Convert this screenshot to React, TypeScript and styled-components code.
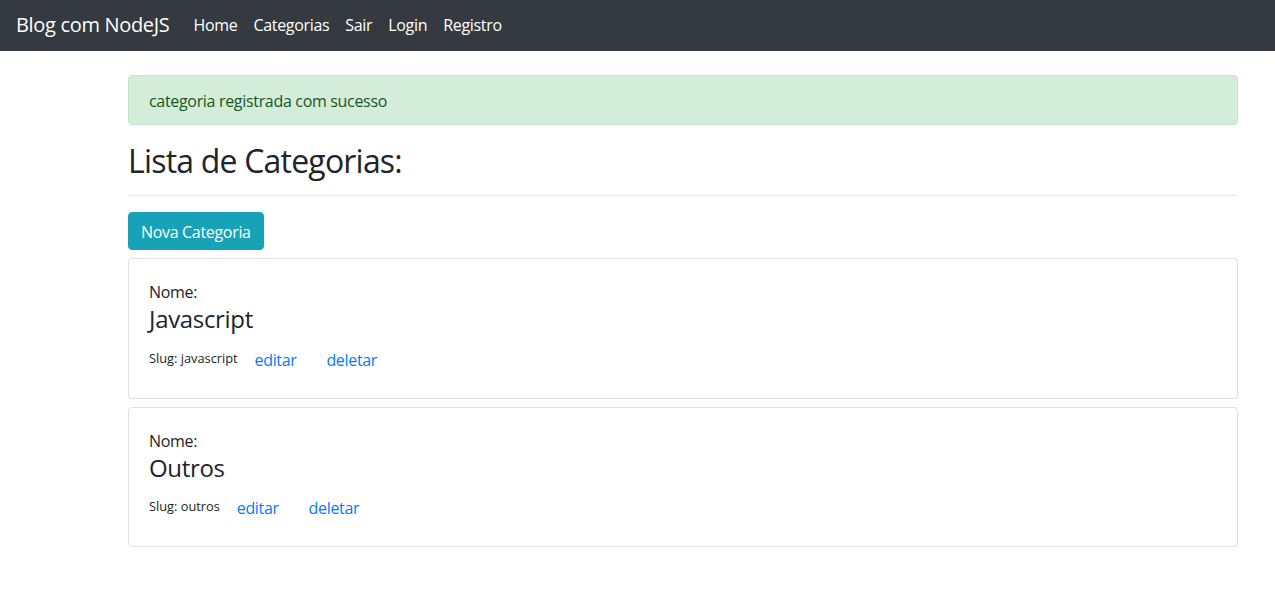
import React from 'react';
import styled, {createGlobalStyle} from 'styled-components';

const GlobalStyle = createGlobalStyle`
  * { box-sizing: border-box; }
  body {
    margin: 0;
    background: #fff;
    color: #212529;
    font-family: "Open Sans", "Noto Sans", sans-serif;
    font-size: 16px;
    line-height: 1.5;
    letter-spacing: -0.02em;
  }
`;

const Navbar = styled.nav`
  display: flex;
  align-items: center;
  height: 51px;
  padding: 0 16px 2px;
  background: #343a40;
`;

const Brand = styled.a`
  margin-right: 16px;
  font-size: 20px;
  line-height: 30px;
  color: #fff;
  text-decoration: none;
`;

const NavList = styled.div`
  display: flex;
`;

const NavLink = styled.a`
  padding: 8px;
  color: #fff;
  text-decoration: none;
`;

const Container = styled.main`
  width: 1140px;
  margin-left: 113px;
  padding: 24px 15px 0;
`;

const Alert = styled.div`
  padding: 13px 20px 11px;
  margin-bottom: 16px;
  border: 1px solid #c3e6cb;
  border-radius: 4px;
  background: #d4edda;
  color: #155724;
`;

const Title = styled.h2`
  margin: 0 0 8px;
  padding-top: 1px;
  height: 38.4px;
  font-size: 32px;
  font-weight: 500;
  line-height: 1.2;
  letter-spacing: -0.025em;
`;

const Rule = styled.hr`
  margin: 16px 0;
  border: 0;
  border-top: 1px solid rgba(0, 0, 0, 0.1);
`;

const Button = styled.button`
  padding: 7px 12px 5px;
  border: 1px solid #17a2b8;
  border-radius: 4px;
  background: #17a2b8;
  color: #fff;
  font: inherit;
  letter-spacing: inherit;
  line-height: 24px;
`;

const Card = styled.div`
  margin-top: 8px;
  padding: 20px;
  border: 1px solid rgba(0, 0, 0, 0.125);
  border-radius: 4px;
`;

const Label = styled.div`
  padding-top: 1px;
  height: 24px;
`;

const Name = styled.h4`
  margin: 0 0 5px;
  font-size: 24px;
  font-weight: 500;
  line-height: 1.3;
`;

const Slug = styled.small`
  font-size: 12.8px;
  letter-spacing: 0;
`;

const LinkButton = styled.a`
  display: inline-block;
  padding: 7px 12px 5px;
  border: 1px solid transparent;
  color: #007bff;
  line-height: 24px;
  vertical-align: middle;
  text-decoration: none;
`;

const categorias = [
  {nome: 'Javascript', slug: 'javascript'},
  {nome: 'Outros', slug: 'outros'},
];

export default function App() {
  return (
    <>
      <GlobalStyle />
      <Navbar>
        <Brand href="#">Blog com NodeJS</Brand>
        <NavList>
          {['Home', 'Categorias', 'Sair', 'Login', 'Registro'].map((item) => (
            <NavLink key={item} href="#">
              {item}
            </NavLink>
          ))}
        </NavList>
      </Navbar>
      <Container>
        <Alert>categoria registrada com sucesso</Alert>
        <Title>Lista de Categorias:</Title>
        <Rule />
        <Button>Nova Categoria</Button>
        {categorias.map((c) => (
          <Card key={c.slug}>
            <Label>Nome:</Label>
            <Name>{c.nome}</Name>
            <Slug>Slug: {c.slug}</Slug> <LinkButton href="#">editar</LinkButton>{' '}
            <LinkButton href="#">deletar</LinkButton>
          </Card>
        ))}
      </Container>
    </>
  );
}
